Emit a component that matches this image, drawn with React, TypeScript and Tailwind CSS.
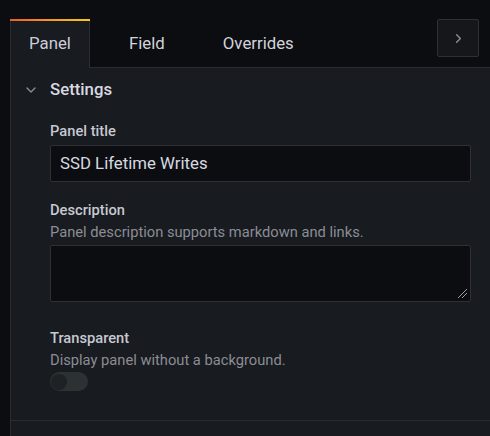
import { ChevronDown, ChevronRight } from 'lucide-react'

function Field({ label, hint, children }: { label: string; hint?: string; children: React.ReactNode }) {
  return (
    <div className="flex flex-col">
      <div className="h-[20px] text-[14.7px] leading-[20px] font-medium text-[#c7c8d2]">{label}</div>
      {hint && <div className="mt-[2px] h-[20px] text-[14.7px] leading-[20px] text-[#8c8d96]">{hint}</div>}
      {children}
    </div>
  )
}

export default function App() {
  return (
    <div
      className="flex h-[436px] w-[490px] overflow-hidden bg-[#0c0d10] text-[#ccccdc]"
      style={{ fontFamily: 'Roboto, "Liberation Sans", sans-serif' }}
    >
      <div className="w-[10px] shrink-0" />
      <div className="flex min-w-0 flex-1 flex-col">
        {/* tab bar */}
        <div className="flex h-[68px] shrink-0 items-end">
          <div className="relative flex h-[49px] w-[80px] shrink-0 items-center justify-center border-x border-[#2a2c31] bg-[#181b1f] text-[16.8px]">
            <div className="absolute -left-px -right-px top-0 h-[2px] bg-gradient-to-r from-[#f05a28] to-[#fbca0a]" />
            Panel
          </div>
          <div className="flex h-full flex-1 items-start border-b border-[#2a2c31] pt-[19px]">
            <div className="flex h-[50px] items-center gap-[58px] pl-[39px] text-[16.8px] text-[#d2d3dc]">
              <span>Field</span>
              <span>Overrides</span>
            </div>
            <div className="flex-1" />
            <button className="mr-[11px] flex h-[38px] w-[42px] items-center justify-center rounded-[2px] border border-[#2e3036] bg-[#15171b] text-[#8c8d96]">
              <ChevronRight size={15} strokeWidth={2.2} />
            </button>
          </div>
        </div>

        {/* content */}
        <div className="flex flex-1 flex-col border-l border-[#2a2c31] bg-[#181b1f]">
          <div className="flex h-[44px] items-center pl-[12px]">
            <ChevronDown size={16} strokeWidth={2} className="text-[#8c8d96]" />
            <span className="ml-[11px] text-[16.8px] font-medium text-[#d8d9e0]">Settings</span>
          </div>

          <div className="flex flex-col pl-[39px] pr-[19px] pt-[9px]">
            <Field label="Panel title">
              <div className="mt-[4px] flex h-[37px] items-center rounded-[2px] border border-[#2e3036] bg-[#0c0d10] px-[9px] text-[16.8px] text-[#d8d9e0]">
                SSD Lifetime Writes
              </div>
            </Field>

            <div className="mt-[18px]">
              <Field label="Description" hint="Panel description supports markdown and links.">
                <div className="relative mt-[3px] h-[57px] rounded-[2px] border border-[#2e3036] bg-[#0c0d10]">
                  <svg className="absolute bottom-[2px] right-[2px]" width="11" height="11" viewBox="0 0 11 11">
                    <path d="M1 10 L10 1 M5 10 L10 5" stroke="#9a9ba3" strokeWidth="1" />
                  </svg>
                </div>
              </Field>
            </div>

            <div className="mt-[26px]">
              <Field label="Transparent" hint="Display panel without a background.">
                <div className="mt-[2px] flex h-[19px] w-[38px] items-center rounded-full bg-[#2c3134] pl-[1px]">
                  <div className="h-[16px] w-[16px] rounded-full bg-[#1e2225]" />
                </div>
              </Field>
            </div>
          </div>

          <div className="mt-[29px] border-t border-[#2a2c31]" />
        </div>
      </div>
    </div>
  )
}
